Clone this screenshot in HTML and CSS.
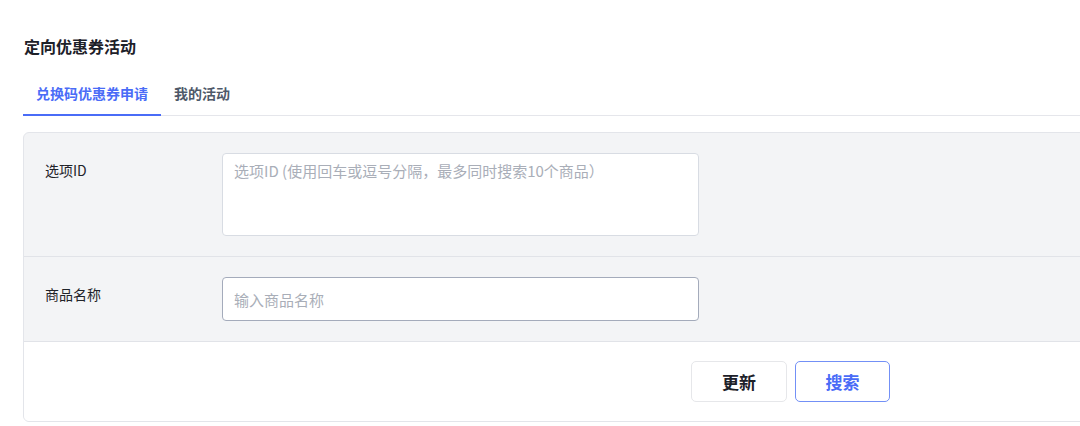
FILE: index.html
```html
<!DOCTYPE html>
<html lang="zh">
<head>
<meta charset="utf-8">
<link rel="stylesheet" href="styles.css">
</head>
<body>
<div class="page">
  <h1 class="title">定向优惠券活动</h1>
  <div class="tabs">
    <div class="tab active">兑换码优惠券申请</div>
    <div class="tab">我的活动</div>
  </div>
  <div class="card">
    <div class="row row-tall">
      <label class="label">选项ID</label>
      <textarea class="field area" placeholder="选项ID (使用回车或逗号分隔，最多同时搜索10个商品）"></textarea>
    </div>
    <div class="row">
      <label class="label">商品名称</label>
      <input class="field input focus" placeholder="输入商品名称">
    </div>
    <div class="actions">
      <button class="btn">更新</button>
      <button class="btn primary">搜索</button>
    </div>
  </div>
</div>
</body>
</html>
```
FILE: styles.css
```css
html, body {
  margin: 0;
  padding: 0;
  background: #ffffff;
  overflow: hidden;
}
body {
  font-family: "Noto Sans CJK SC", "Inter", sans-serif;
  color: #1f2329;
  width: 1080px;
  height: 426px;
}
.page {
  padding-left: 23px;
}
.title {
  margin: 0;
  padding-top: 36px;
  padding-left: 1px;
  font-size: 16px;
  line-height: 20px;
  font-weight: 700;
  color: #1d2129;
}
.tabs {
  display: flex;
  margin-top: 15px;
  border-bottom: 1px solid #e5e6eb;
}
.tab {
  padding: 12px 13px 11px;
  font-size: 14px;
  line-height: 20px;
  font-weight: 600;
  color: #4e5969;
  border-bottom: 2px solid transparent;
  margin-bottom: -1px;
}
.tab.active {
  color: #4a6cf7;
  border-bottom-color: #4a6cf7;
}
.card {
  margin-top: 16px;
  width: 1100px;
  border: 1px solid #e3e5ea;
  border-radius: 6px;
  background: #f3f4f6;
  overflow: hidden;
}
.row {
  display: flex;
  align-items: flex-start;
  padding: 20px 0 20px 21px;
  border-bottom: 1px solid #e1e3e8;
}
.label {
  width: 177px;
  flex: none;
  font-size: 14px;
  line-height: 20px;
  padding-top: 7px;
  color: #1f2329;
}
.field {
  box-sizing: border-box;
  width: 477px;
  border: 1px solid #d8dce3;
  border-radius: 4px;
  background: #fff;
  font-family: inherit;
  font-size: 15px;
  line-height: 20px;
  padding: 7px 11px;
  color: #1f2329;
  outline: none;
  margin: 0;
  display: block;
}
.field::placeholder {
  color: #a9aeb8;
}
.area {
  height: 83px;
  resize: none;
}
.input {
  height: 44px;
  padding-top: 11px;
  padding-bottom: 11px;
}
.input.focus {
  border-color: #a4abbb;
}
.actions {
  display: flex;
  gap: 8px;
  background: #fff;
  padding: 19px 0 19px 667px;
}
.btn {
  box-sizing: border-box;
  width: 96px;
  height: 41px;
  border: 1px solid #e6e7ea;
  border-radius: 5px;
  background: #fff;
  font-family: inherit;
  font-size: 17px;
  font-weight: 700;
  color: #1d2129;
  cursor: pointer;
}
.btn.primary {
  width: 95px;
  border-color: #7390f6;
  color: #4a6cf7;
}
```
